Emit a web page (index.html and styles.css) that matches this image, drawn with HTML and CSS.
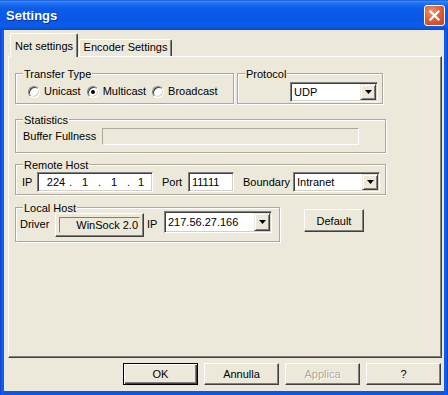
FILE: index.html
```html
<!DOCTYPE html>
<html>
<head>
<meta charset="utf-8">
<link rel="stylesheet" href="styles.css">
</head>
<body>
<div class="window">
  <div class="titlebar">
    <span class="title">Settings</span>
    <span class="close"><svg width="13" height="13" viewBox="0 0 13 13"><path d="M2.5 2.5L10.5 10.5M10.5 2.5L2.5 10.5" stroke="#fff" stroke-width="2.2" stroke-linecap="square"/></svg></span>
  </div>
  <div class="client">
    <div class="tabs">
      <div class="tab active">Net settings</div>
      <div class="tab inactive">Encoder Settings</div>
    </div>
    <div class="panel">
      <div class="row r1">
        <div class="group g-transfer">
          <div class="gtitle">Transfer Type</div>
          <div class="radios">
            <span class="radio"><span class="rb"></span>Unicast</span>
            <span class="radio"><span class="rb on"></span>Multicast</span>
            <span class="radio"><span class="rb"></span>Broadcast</span>
          </div>
        </div>
        <div class="group g-protocol">
          <div class="gtitle">Protocol</div>
          <div class="combo c-udp"><span class="val">UDP</span><span class="arrow"><svg width="7" height="4" viewBox="0 0 7 4"><path d="M0 0H7L3.5 4Z" fill="#000"/></svg></span></div>
        </div>
      </div>
      <div class="group g-stats">
        <div class="gtitle">Statistics</div>
        <div class="frow stats-row">
          <span class="lbl l-buf">Buffer Fullness</span>
          <span class="bar"></span>
        </div>
      </div>
      <div class="group g-remote">
        <div class="gtitle">Remote Host</div>
        <div class="frow remote-row">
          <span class="lbl l-ip">IP</span>
          <span class="field ipfield"><span class="seg">224</span><span class="dot">.</span><span class="seg">1</span><span class="dot">.</span><span class="seg">1</span><span class="dot">.</span><span class="seg last">1</span></span>
          <span class="lbl l-port">Port</span>
          <span class="field portfield">11111</span>
          <span class="lbl l-bound">Boundary</span>
          <span class="combo c-bound"><span class="val">Intranet</span><span class="arrow"><svg width="7" height="4" viewBox="0 0 7 4"><path d="M0 0H7L3.5 4Z" fill="#000"/></svg></span></span>
        </div>
      </div>
      <div class="row r4">
        <div class="group g-local">
          <div class="gtitle">Local Host</div>
          <div class="local-row">
            <span class="lbl l-driver">Driver</span>
            <span class="winsock"><span class="ws-inner">WinSock 2.0</span></span>
            <span class="lbl l-ip2">IP</span>
            <span class="combo c-ip"><span class="val">217.56.27.166</span><span class="arrow"><svg width="7" height="4" viewBox="0 0 7 4"><path d="M0 0H7L3.5 4Z" fill="#000"/></svg></span></span>
          </div>
        </div>
        <span class="btn b-default">Default</span>
      </div>
    </div>
    <div class="buttons">
      <span class="btn b-ok">OK</span>
      <span class="btn">Annulla</span>
      <span class="btn disabled">Applica</span>
      <span class="btn">?</span>
    </div>
  </div>
</div>
</body>
</html>
```
FILE: styles.css
```css
* { box-sizing: border-box; }
body {
  margin: 0;
  font-family: "Liberation Sans", Arial, sans-serif;
  font-size: 11px;
  color: #000;
}
.window {
  width: 448px;
  height: 395px;
  background: linear-gradient(to right, #0A3FD2 0, #1660EC 2px, #0D55E2 4px, #0D55E2 444px, #1660EC 446px, #0A3FD2 448px);
  display: flex;
  flex-direction: column;
}
.titlebar {
  height: 30px;
  flex: none;
  display: flex;
  align-items: center;
  justify-content: space-between;
  padding: 0 3px 0 6px;
  background: linear-gradient(to bottom, #0A3FD0 0, #3D8DF7 1px, #2274F2 3px, #0C5DE9 8px, #0857E5 20px, #0B5EEA 26px, #0A4FD8 29px, #0845CC 30px);
}
.title {
  color: #fff;
  font-weight: bold;
  font-size: 13px;
  text-shadow: 1px 1px 0 #0A2E9E;
  margin-top: 1px;
}
.close {
  width: 21px;
  height: 21px;
  border: 1px solid #fff;
  border-radius: 3px;
  background: radial-gradient(circle at 35% 30%, #F0946E 0, #E0623A 45%, #C23E18 100%);
  display: flex;
  align-items: center;
  justify-content: center;
}
.client {
  flex: none;
  height: 361px;
  margin: 0 4px;
  background: #EDE9DA;
  padding-top: 3px;
  display: flex;
  flex-direction: column;
}
.tabs {
  height: 24px;
  flex: none;
  display: flex;
  align-items: flex-end;
  padding-left: 6px;
  margin-bottom: -1px;
  position: relative;
  z-index: 1;
}
.tab {
  background: #EDE9DA;
  border-top: 1px solid #fff;
  border-left: 1px solid #fff;
  border-right: 1px solid #404040;
  box-shadow: inset -1px 0 0 #808080;
  border-radius: 2px 2px 0 0;
  text-align: center;
  line-height: 13px;
  white-space: nowrap;
}
.tab.active {
  width: 68px;
  height: 24px;
  padding-top: 6px;
}
.tab.inactive {
  width: 93px;
  height: 17px;
  padding-top: 1px;
  margin-left: 1px;
  margin-bottom: 1px;
}
.panel {
  height: 302px;
  flex: none;
  margin: 0 2px 0 4px;
  border: 1px solid;
  border-color: #fff #404040 #404040 #fff;
  box-shadow: inset -1px -1px 0 #808080;
  padding-left: 6px;
}
.row { display: flex; }
.r1 { margin-top: 16px; gap: 3px; }
.group {
  border: 1px solid #ACA899;
  box-shadow: inset 1px 1px 0 #fff, 1px 1px 0 #fff;
}
.gtitle {
  width: fit-content;
  margin: -6px 0 0 7px;
  padding: 0 1px;
  background: #EDE9DA;
  line-height: 13px;
  white-space: nowrap;
}
.g-transfer { width: 219px; height: 31px; }
.g-protocol { width: 146px; height: 31px; display: flex; flex-direction: column; }
.radios {
  display: flex;
  align-items: center;
  height: 13px;
  margin-top: 4px;
  padding-left: 12px;
}
.radio {
  display: flex;
  align-items: center;
  gap: 4px;
  margin-right: 6px;
  line-height: 13px;
}
.rb {
  width: 12px;
  height: 12px;
  border-radius: 50%;
  border: 1px solid;
  border-color: #808080 #fff #fff #808080;
  background: #fff;
  box-shadow: inset 1px 1px 0 #404040, inset -1px -1px 0 #D4D0C8;
  display: flex;
  align-items: center;
  justify-content: center;
}
.rb.on::after {
  content: "";
  width: 4px;
  height: 4px;
  border-radius: 50%;
  background: #000;
}
.combo {
  display: flex;
  height: 20px;
  border: 1px solid;
  border-color: #808080 #fff #fff #808080;
  box-shadow: inset 1px 1px 0 #404040, inset -1px -1px 0 #D4D0C8;
  background: #fff;
  padding: 1px;
}
.combo .val {
  flex: 1;
  line-height: 16px;
  padding-left: 2px;
  white-space: nowrap;
}
.combo .arrow {
  width: 16px;
  background: #EDE9DA;
  border: 1px solid;
  border-color: #EDE9DA #404040 #404040 #EDE9DA;
  box-shadow: inset 1px 1px 0 #fff, inset -1px -1px 0 #808080;
  display: flex;
  align-items: center;
  justify-content: center;
}
.c-udp { width: 88px; margin: 1px 4px 0 auto; }
.g-stats { width: 371px; height: 34px; margin-top: 15px; }
.frow { display: flex; align-items: center; }
.stats-row { margin-top: 1px; height: 17px; padding-left: 7px; }
.lbl { line-height: 13px; white-space: nowrap; flex: none; }
.l-buf { width: 79px; }
.bar {
  width: 257px;
  height: 17px;
  border: 1px solid;
  border-color: #ACA899 #fff #fff #ACA899;
}
.g-remote { width: 371px; height: 31px; margin-top: 11px; }
.remote-row { height: 20px; padding-left: 6px; }
.l-ip { width: 15px; }
.field {
  height: 20px;
  border: 1px solid;
  border-color: #808080 #fff #fff #808080;
  box-shadow: inset 1px 1px 0 #404040, inset -1px -1px 0 #D4D0C8;
  background: #fff;
  line-height: 18px;
  white-space: nowrap;
}
.ipfield { width: 116px; display: flex; padding-left: 6px; }
.seg { width: 24px; text-align: center; }
.seg.last { width: 20px; }
.dot { width: 5px; text-align: center; }
.l-port { margin-left: 9px; width: 26px; }
.portfield { width: 46px; padding-left: 3px; }
.l-bound { margin-left: 9px; width: 50px; }
.c-bound { width: 87px; }
.r4 { margin-top: 12px; align-items: flex-start; }
.g-local { width: 265px; height: 35px; }
.local-row {
  display: flex;
  align-items: flex-start;
  margin-top: -4px;
  padding-left: 4px;
}
.l-driver { width: 35px; margin-top: 7px; }
.winsock {
  width: 89px;
  height: 24px;
  margin-top: 2px;
  border: 1px solid;
  border-color: #fff #404040 #404040 #fff;
  box-shadow: inset -1px -1px 0 #808080;
  padding: 3px;
  display: flex;
}
.ws-inner {
  flex: 1;
  border: 1px solid;
  border-color: #808080 #EDE9DA #EDE9DA #808080;
  text-align: right;
  line-height: 14px;
  padding-right: 1px;
  white-space: nowrap;
}
.l-ip2 { margin-left: 3px; width: 17px; margin-top: 7px; }
.c-ip { width: 108px; height: 22px; }
.c-ip .val { line-height: 18px; }
.btn {
  width: 75px;
  height: 22px;
  background: #EDE9DA;
  border: 1px solid;
  border-color: #fff #404040 #404040 #fff;
  box-shadow: inset -1px -1px 0 #808080;
  display: flex;
  align-items: center;
  justify-content: center;
  white-space: nowrap;
}
.b-default {
  width: 60px;
  height: 23px;
  margin: 2px 0 0 24px;
}
.buttons {
  display: flex;
  justify-content: flex-end;
  gap: 6px;
  margin-top: 5px;
  padding-right: 3px;
}
.b-ok {
  border: 1px solid #000;
  box-shadow: inset 1px 1px 0 #fff, inset -1px -1px 0 #404040, inset -2px -2px 0 #808080;
}
.btn.disabled {
  color: #ACA899;
  text-shadow: 1px 1px 0 #fff;
}
```
